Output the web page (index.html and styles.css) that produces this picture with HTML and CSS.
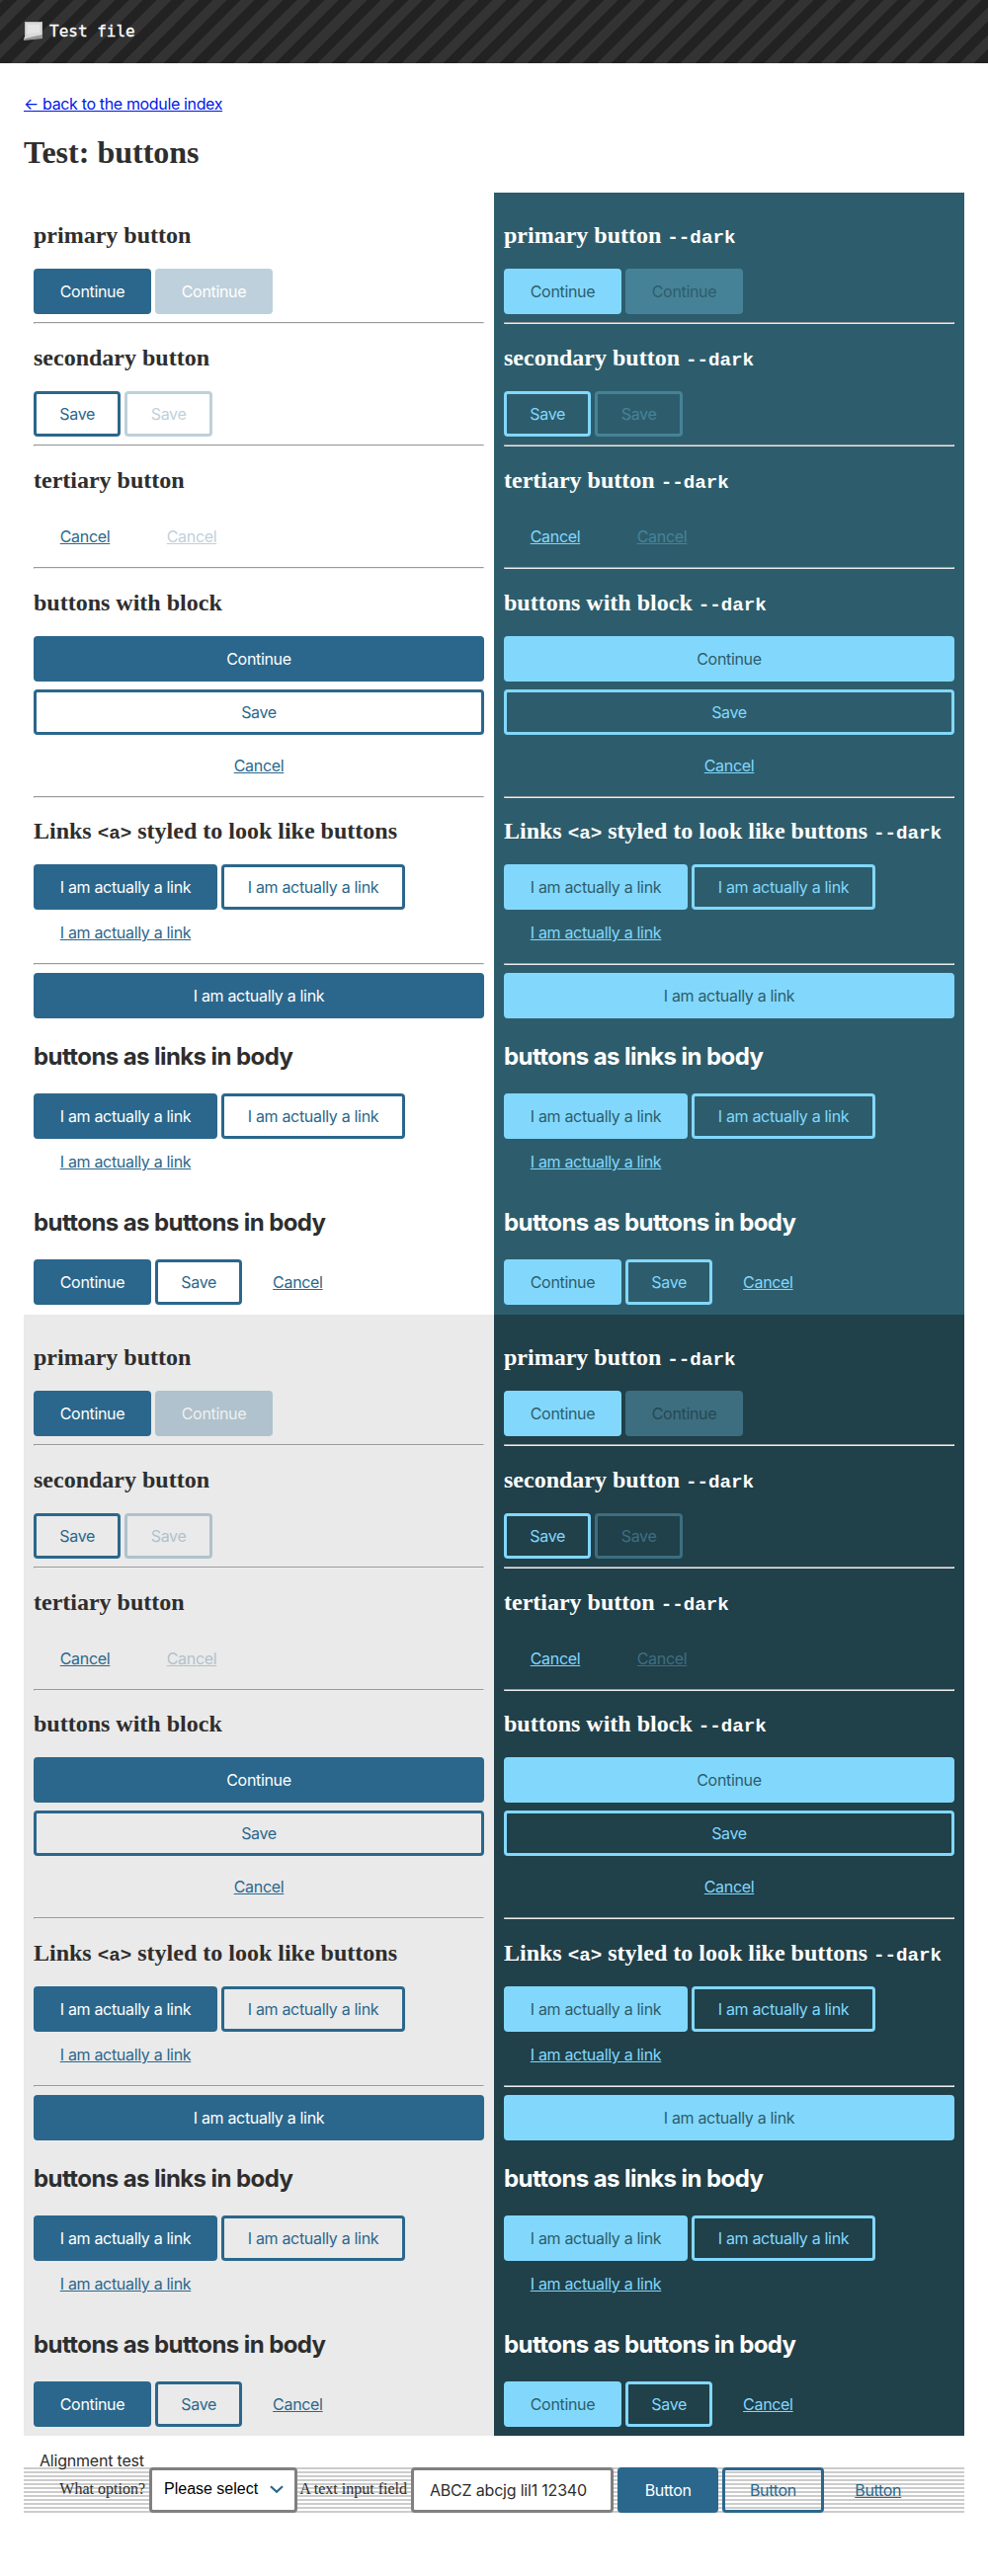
FILE: index.html
```html
<!DOCTYPE html>
<html lang="en">
<head>
<meta charset="utf-8">
<title>Test: buttons</title>
<link rel="stylesheet" href="styles.css">
</head>
<body>
<header class="banner">
  <svg class="banner-icon" viewBox="0 0 19 19" width="19" height="19" aria-hidden="true"><path fill="#bdbdbd" d="M1 0h18v15H1z"/><path fill="#d9d9d9" d="M2 1h16v13H2z"/><path fill="#e4e4e4" d="M4 3h12v8L4 12z"/><path fill="#999" d="M0 16l19-3v4L0 19z"/><path fill="#ddd" d="M1 15l17-3v1L1 17z"/></svg>
  <span>Test file</span>
</header>
<main class="page">
  <a class="back" href="#">← back to the module index</a>
  <h1 class="title">Test: buttons</h1>
  <div class="grid" id="grid"></div>
  <div class="align-label">Alignment test</div>
  <form class="align">
    <label class="label" for="opt">What option?</label>
    <button class="select" id="opt" type="button">Please select<svg width="14" height="9" viewBox="0 0 14 9" aria-hidden="true"><path d="M1 1.2l6 5.6 6-5.6" fill="none" stroke="#2b678c" stroke-width="2.2"/></svg></button>
    <label class="label label--text" for="txt">A text input field</label>
    <input class="input" id="txt" value="ABCZ abcjg lil1 12340">
    <button class="btn btn--primary w-button" type="button">Button</button>
    <button class="btn btn--secondary w-button" type="button">Button</button>
    <button class="btn btn--tertiary w-button" type="button">Button</button>
  </form>
</main>
<script src="panels.js"></script>
</body>
</html>
```
FILE: styles.css
```css
* { box-sizing: border-box; }
body { margin: 0; background: #fff; color: #2e2e2e; font: 16px/20px "Liberation Serif", serif; }
.banner { display: flex; align-items: center; gap: 7px; height: 64px; padding: 0 24px 2px; color: #fff; font: 16px "DejaVu Sans Mono", monospace; -webkit-text-stroke: 0.3px #fff; background: repeating-linear-gradient(-45deg, #222, #222 10px, #333 10px, #333 20px); }
.page { padding: 31px 24px 0; }
.back { display: block; width: max-content; height: 20px; color: #0019e8; font: 16px/20px Inter, sans-serif; letter-spacing: -0.35px; }
.title { margin: 21px 0 23px; font: bold 32px/36px "Liberation Serif", serif; }
.grid { display: grid; grid-template-columns: 1fr 1fr; }
.panel { padding: 10px; }
.panel--2 { padding-bottom: 9px; background: #eaeaea; }
.panel--dark { color: #fff; background: #2d5d6c; }
.panel--dark.panel--2 { background: #20404a; }
.heading { margin: 20px 0; font: bold 24px/28px "Liberation Serif", serif; white-space: nowrap; }
.heading--first, .heading--links, .panel--2 .heading--block { margin-top: 19px; }
.panel--2 .heading--links { margin-top: 20px; }
.heading code { font: bold 19.2px/20px "Liberation Mono", monospace; }
.heading--body { margin: 20px 0; padding-top: 2px; font: bold 24px/34px Inter, sans-serif; letter-spacing: -0.58px; }
.rule { margin: 8px 0; border: 1px solid; border-color: #9a9a9a #eee #eee #9a9a9a; }
.row { display: flex; flex-wrap: wrap; column-gap: 4px; }
.stack { display: grid; gap: 8px; }
.btn { display: flex; align-items: center; justify-content: center; height: 46px; padding: 0; border: 3px solid transparent; border-radius: 4px; background: transparent; color: #2b678c; font: 16px/20px Inter, sans-serif; letter-spacing: -0.32px; text-decoration: none; }
.btn--primary { background: #2b678c; border-color: #2b678c; color: #fff; }
.btn--secondary { border-color: #2b678c; }
.btn--tertiary { text-decoration: underline; }
.panel--dark .btn { color: #82d8fc; }
.panel--dark .btn--primary { background: #82d8fc; border-color: #82d8fc; color: #2d5d6c; }
.panel--dark .btn--secondary { border-color: #82d8fc; }
.btn:disabled { opacity: 0.3; }
.w-continue { width: 119px; }
.w-save { width: 88.4px; }
.w-cancel { width: 104px; }
.w-link { width: 186px; }
.w-button { width: 102.3px; }
.align-label { margin-top: 15px; padding-left: 16px; height: 17px; font: 16px/20px Inter, sans-serif; letter-spacing: -0.2px; }
.align { display: flex; height: 46px; background: repeating-linear-gradient(#ccc 0 2px, transparent 2px 4px); }
.align .btn + .btn { margin-left: 4px; }
.label { width: 127px; padding: 12px 4px 0 0; text-align: right; line-height: 20px; }
.label--text { width: 115px; }
.select, .input { border: 3px solid #808080; border-radius: 4px; background: #fff; }
.select { display: flex; align-items: center; justify-content: space-between; width: 150px; padding: 0 11px 2px 12px; color: #000; font: 16px/20px "Liberation Sans", sans-serif; }
.input { width: 205px; margin-right: 4px; padding: 0 16px; color: #2e2e2e; font: 16px/20px Inter, sans-serif; letter-spacing: -0.2px; }
```
FILE: panels.js
```js
const button = (kind, text, disabled) =>
  `<button class="btn btn--${kind} w-${text.toLowerCase()}" type="button"${disabled ? ' disabled' : ''}>${text}</button>`;
const link = kind => `<a class="btn btn--${kind} w-link" href="#">I am actually a link</a>`;
const rule = '<hr class="rule">';
const row = (...items) => `<div class="row">${items.join('')}</div>`;

function panel(shade, dark) {
  const heading = (text, extra = '') =>
    `<h2 class="heading ${extra}">${text}${dark ? ' <code>--dark</code>' : ''}</h2>`;
  const bodyHeading = text => `<h2 class="heading--body">${text}</h2>`;
  const pair = (kind, text) => row(button(kind, text), button(kind, text, true));
  const links = row(link('primary'), link('secondary'), link('tertiary'));
  return `<section class="panel panel--${shade}${dark ? ' panel--dark' : ''}">
    ${heading('primary button', 'heading--first')}${pair('primary', 'Continue')}${rule}
    ${heading('secondary button')}${pair('secondary', 'Save')}${rule}
    ${heading('tertiary button')}${pair('tertiary', 'Cancel')}${rule}
    ${heading('buttons with block', 'heading--block')}
    <div class="stack">
      <button class="btn btn--primary">Continue</button>
      <button class="btn btn--secondary">Save</button>
      <button class="btn btn--tertiary">Cancel</button>
    </div>${rule}
    ${heading('Links <code>&lt;a&gt;</code> styled to look like buttons', 'heading--links')}
    ${links}${rule}
    <a class="btn btn--primary" href="#">I am actually a link</a>
    ${bodyHeading('buttons as links in body')}${links}
    ${bodyHeading('buttons as buttons in body')}
    ${row(button('primary', 'Continue'), button('secondary', 'Save'), button('tertiary', 'Cancel'))}
  </section>`;
}

document.getElementById('grid').innerHTML =
  [1, 2].map(shade => panel(shade, false) + panel(shade, true)).join('');
```
